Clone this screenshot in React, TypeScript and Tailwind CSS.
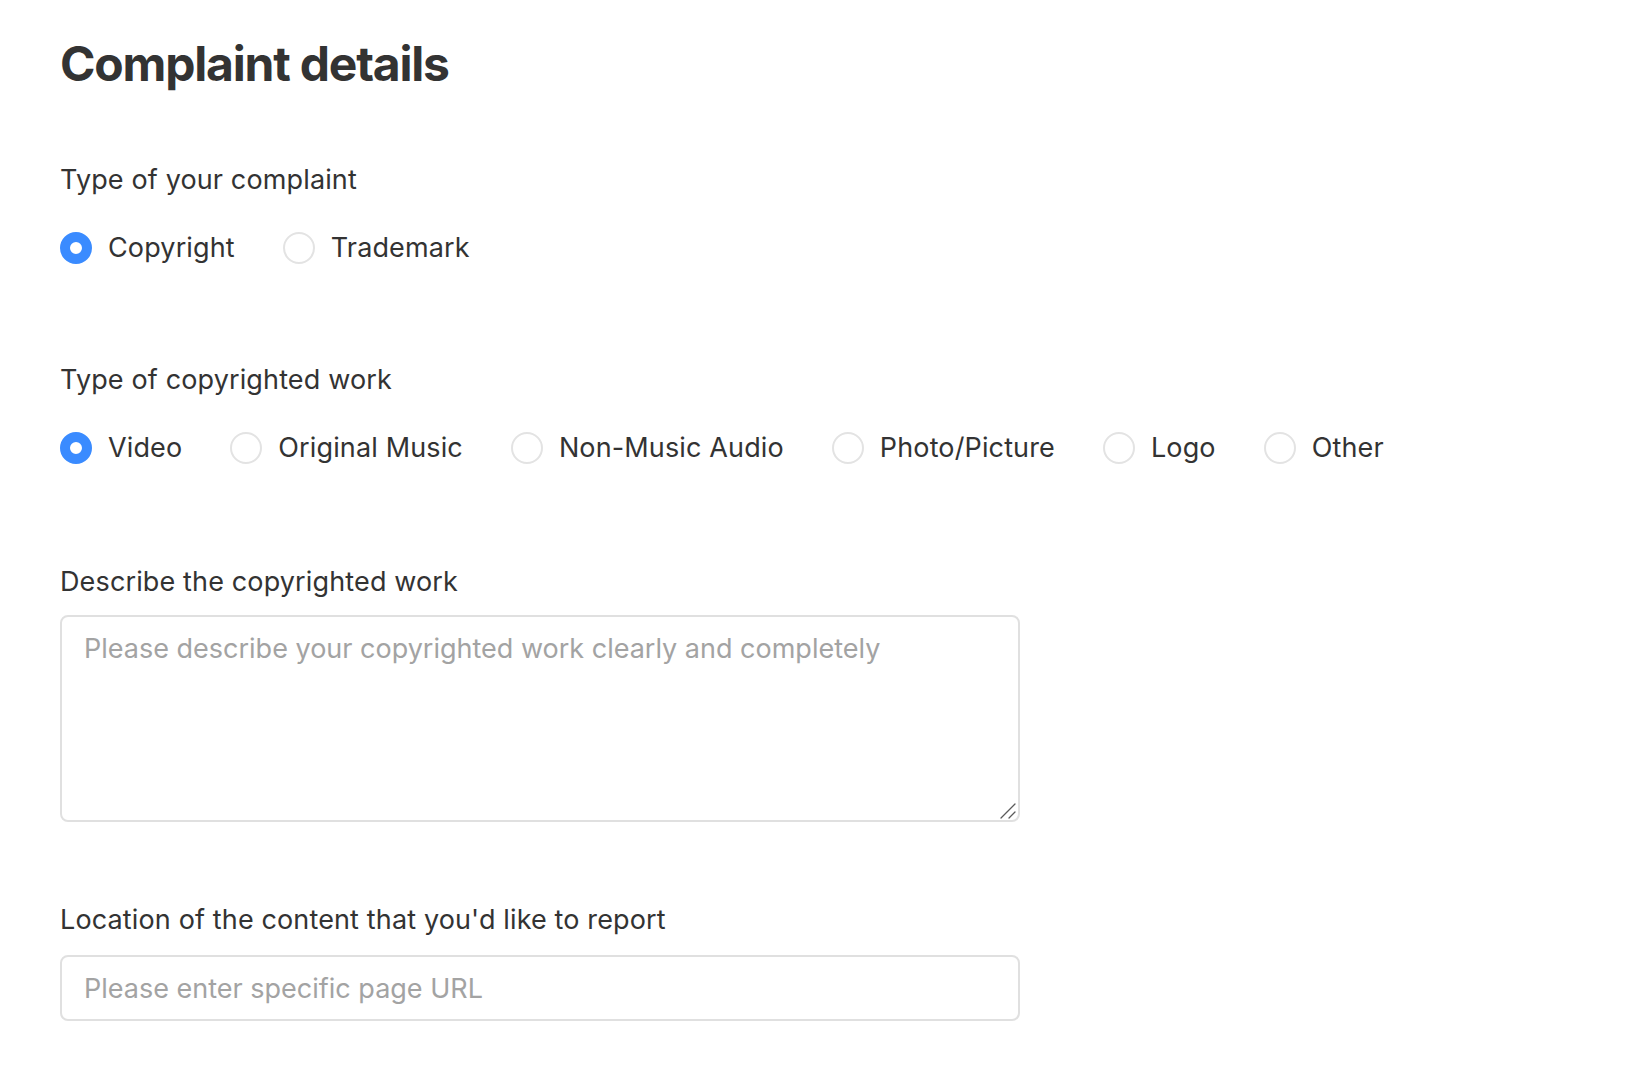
import React from 'react';

const complaintTypes = ['Copyright', 'Trademark'];
const workTypes = ['Video', 'Original Music', 'Non-Music Audio', 'Photo/Picture', 'Logo', 'Other'];

function Radio({ label, checked }: { label: string; checked?: boolean }) {
  return (
    <label className="flex items-center gap-[16px] cursor-pointer">
      {checked ? (
        <span className="w-[32px] h-[32px] rounded-full border-[10px] border-[#3a8bff] bg-white" />
      ) : (
        <span className="w-[32px] h-[32px] rounded-full border-2 border-[#e3e3e3] bg-white" />
      )}
      <span>{label}</span>
    </label>
  );
}

export default function App() {
  return (
    <div className="min-h-screen bg-white pl-[60px] pt-[34px] font-['Inter','Liberation_Sans',sans-serif] text-[#333333]">
      <h1 className="text-[48px] leading-[60px] font-bold tracking-[-0.025em]">Complaint details</h1>

      <p className="mt-[68px] text-[27px] leading-[36px] tracking-[0.005em]">Type of your complaint</p>
      <div className="mt-[32px] h-[36px] flex items-center gap-[48px] text-[27px] leading-[36px] tracking-[0.005em]">
        {complaintTypes.map((t, i) => (
          <Radio key={t} label={t} checked={i === 0} />
        ))}
      </div>

      <p className="mt-[96px] text-[27px] leading-[36px] tracking-[0.005em]">Type of copyrighted work</p>
      <div className="mt-[32px] h-[36px] flex items-center gap-[48px] text-[27px] leading-[36px] tracking-[0.005em]">
        {workTypes.map((t, i) => (
          <Radio key={t} label={t} checked={i === 0} />
        ))}
      </div>

      <p className="mt-[98px] text-[27px] leading-[36px] tracking-[0.005em]">Describe the copyrighted work</p>
      <div className="relative mt-[15px] w-[960px] h-[207px]">
        <textarea
          className="block w-full h-full resize-none rounded-[8px] border-2 border-[#e0e0e0] px-[22px] pt-[14px] text-[27px] leading-[36px] text-[#333333] placeholder:text-[#a3a3a3] outline-none"
          placeholder="Please describe your copyrighted work clearly and completely"
        />
        {/* resize grip */}
        <svg className="absolute right-[4px] bottom-[3px] w-[16px] h-[16px] pointer-events-none" viewBox="0 0 16 16">
          <path d="M1 15 L15 1 M9 15 L15 9" stroke="#5a5a5a" strokeWidth="1.3" strokeLinecap="round" />
        </svg>
      </div>

      <p className="mt-[80px] text-[27px] leading-[36px] tracking-[0.005em]">Location of the content that you'd like to report</p>
      <input
        className="mt-[17px] block w-[960px] h-[66px] rounded-[8px] border-2 border-[#e0e0e0] px-[22px] py-[13px] text-[27px] leading-[36px] text-[#333333] placeholder:text-[#a3a3a3] outline-none"
        placeholder="Please enter specific page URL"
      />
    </div>
  );
}
